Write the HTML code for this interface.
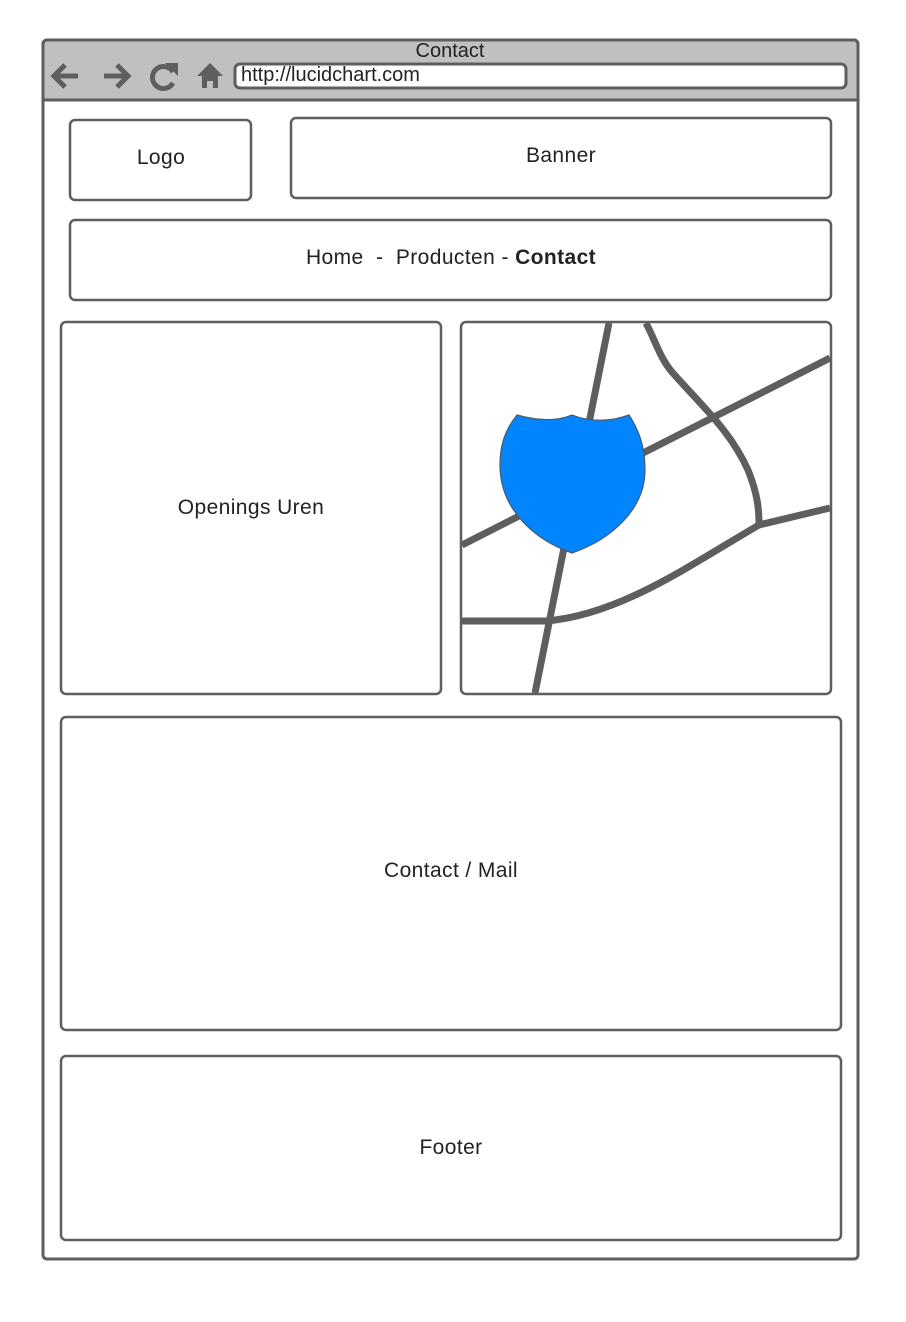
<!DOCTYPE html>
<html><head><style>body{margin:0;background:#fff}svg{display:block}text{font-family:"Liberation Sans",sans-serif;fill:#222}</style></head>
<body>
<svg width="906" height="1322" viewBox="0 0 906 1322">
<rect x="43" y="40" width="815" height="1219" rx="4" fill="#fff" stroke="#5e5e5e" stroke-width="3"/>
<path d="M47,40 h807 a4,4 0 0 1 4,4 v56 h-815 v-56 a4,4 0 0 1 4,-4z" fill="#c0c0c0" stroke="#5e5e5e" stroke-width="3"/>
<text x="450" y="57" font-size="20" text-anchor="middle">Contact</text>
<rect x="235" y="64" width="611" height="24" rx="5" fill="#fff" stroke="#5e5e5e" stroke-width="3"/>
<text x="241" y="81" font-size="20">http://lucidchart.com</text>
<g fill="none" stroke="#5e5e5e" stroke-width="5" stroke-linecap="butt">
<path d="M78,76 H54 M65,65 L54,76 L65,87"/>
<path d="M104,76 H128 M117,65 L128,76 L117,87"/>
<path d="M173,72 A11,11 0 1 0 173,83"/>
</g>
<path d="M165,63 L178,63 L178,76 Z" fill="#5e5e5e"/>
<path d="M210,63 L223,76 H218 V88 H213 V81 H207 V88 H202 V76 H197 Z" fill="#5e5e5e"/>
<g fill="#fff" stroke="#5e5e5e" stroke-width="2.5">
<rect x="70" y="120" width="181" height="80" rx="5"/>
<rect x="291" y="118" width="540" height="80" rx="5"/>
<rect x="70" y="220" width="761" height="80" rx="5"/>
<rect x="61" y="322" width="380" height="372" rx="5"/>
<rect x="461" y="322" width="370" height="372" rx="5"/>
<rect x="61" y="717" width="780" height="313" rx="5"/>
<rect x="61" y="1056" width="780" height="184" rx="5"/>
</g>
<g font-size="21" letter-spacing="0.4" text-anchor="middle">
<text x="161" y="164">Logo</text>
<text x="561" y="162">Banner</text>
<text x="451" y="264" xml:space="preserve">Home  -  Producten - <tspan font-weight="bold">Contact</tspan></text>
<text x="251" y="514">Openings Uren</text>
<text x="451" y="877">Contact / Mail</text>
<text x="451" y="1154">Footer</text>
</g>
<g fill="none" stroke="#5e5e5e" stroke-width="7">
<path d="M609,323 L535,693"/>
<path d="M462,545 L830,358"/>
<path d="M646,323 C655,340 660,358 672,372 C700,404 730,430 748,470 C758,495 759,510 759,525"/>
<path d="M759,525 L830,508"/>
<path d="M462,621 H546 C620,615 690,565 759,525"/>
</g>
<path d="M517,415 C535,420 555,422 572,415 C590,422 610,422 629,415 C640,432 645,448 645,470 C645,510 610,540 572,553 C535,540 500,510 500,465 C500,445 505,430 517,415 Z" fill="#0085ff" stroke="#4a5a6a" stroke-width="1.2"/>
</svg>
</body></html>
